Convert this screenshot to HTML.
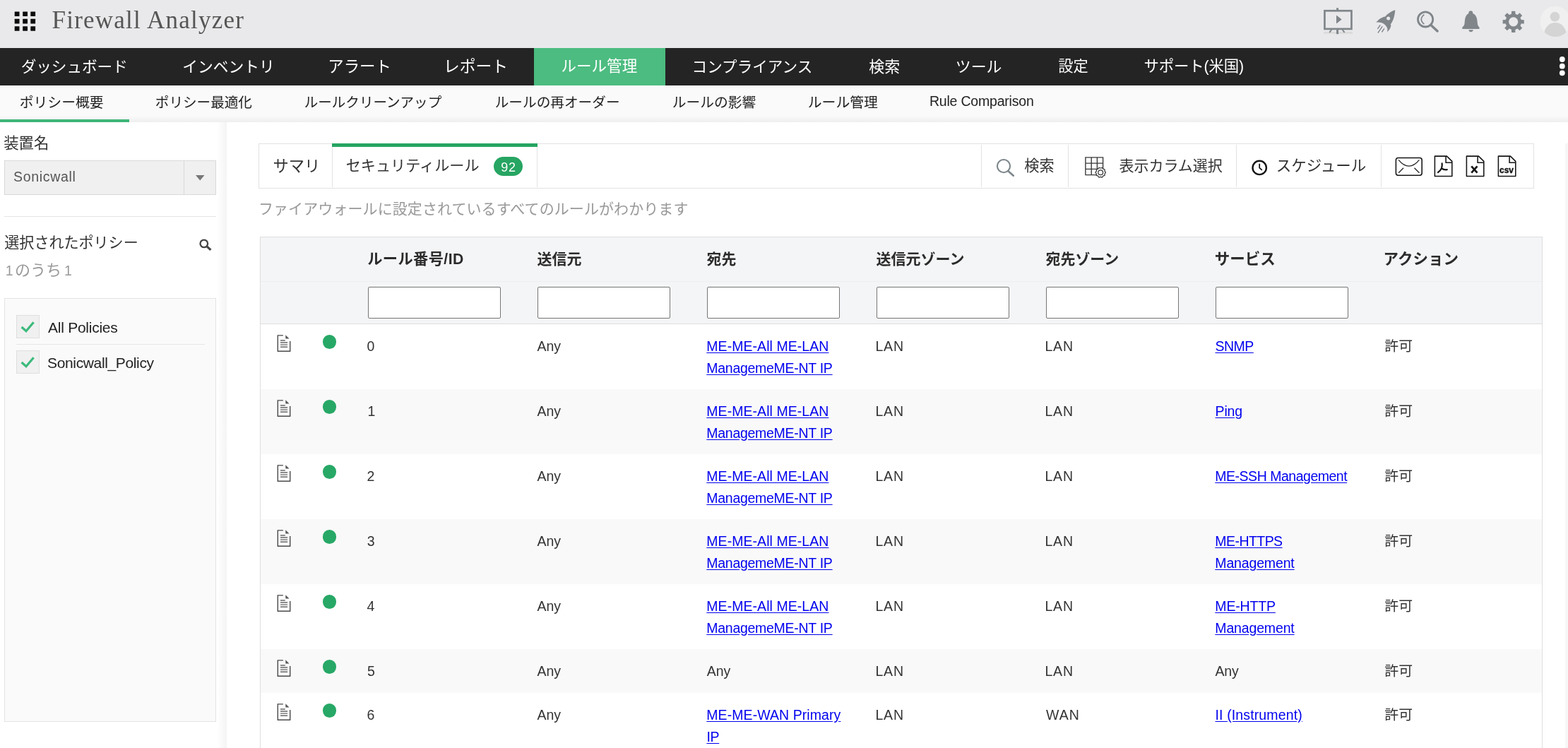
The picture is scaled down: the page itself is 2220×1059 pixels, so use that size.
<!DOCTYPE html>
<html lang="ja"><head><meta charset="utf-8"><title>Firewall Analyzer</title><style>
html,body{margin:0;padding:0}
body{width:2220px;height:1059px;overflow:hidden;position:relative;background:#fff;
font-family:"Liberation Sans","Noto Sans CJK JP",sans-serif;color:#333}
header,nav,aside,main,h1{display:block;margin:0;padding:0;font-weight:normal}
div,.a,.jp,.i{position:absolute}
#app{left:0;top:0;width:2220px;height:1059px;will-change:transform}
.a{white-space:nowrap;margin:0;text-decoration-thickness:1.5px;text-underline-offset:2px}
.jp,.i{display:block;overflow:visible}
.jp text{font-family:"Liberation Sans","Noto Sans CJK JP",sans-serif;white-space:pre}
</style></head>
<body>
<div id="app">
<header>
<div style="left:0px;top:0px;width:2220px;height:68px;background:#e9e9eb"></div>
<svg class="i" style="left:21px;top:16px" width="30" height="30" viewBox="0 0 30 30"><g fill="#0c0c0c"><rect x="-0.30" y="0.50" width="6.8" height="6.6" rx="0.5"/><rect x="11.20" y="0.50" width="6.8" height="6.6" rx="0.5"/><rect x="22.30" y="0.50" width="6.8" height="6.6" rx="0.5"/><rect x="-0.30" y="10.80" width="6.8" height="6.6" rx="0.5"/><rect x="11.20" y="10.80" width="6.8" height="6.6" rx="0.5"/><rect x="22.30" y="10.80" width="6.8" height="6.6" rx="0.5"/><rect x="-0.30" y="21.20" width="6.8" height="6.6" rx="0.5"/><rect x="11.20" y="21.20" width="6.8" height="6.6" rx="0.5"/><rect x="22.30" y="21.20" width="6.8" height="6.6" rx="0.5"/></g></svg>
<h1 class="a" style="left:73.49px;top:10.99px;font-size:35px;line-height:35px;letter-spacing:1.229px;color:#555;font-family:'Liberation Serif',serif;">Firewall Analyzer</h1>
<svg class="i" style="left:1873px;top:10px" width="44" height="40" viewBox="0 0 44 40"><rect x="1.1" y="35" width="40.8" height="2.8" fill="#dbdbdc"/><g fill="none" stroke="#80868a"><rect x="2.45" y="5.25" width="38" height="25.7" stroke-width="2.7"/><path d="M20.6 1.2v4M20.6 32v6.2" stroke-width="3"/><path d="M12.2 32l-2.9 4M27.6 32l3 4" stroke-width="2"/></g><path d="M19 11.5l7.7 6L19 23.4z" fill="#80868a"/></svg>
<svg class="i" style="left:1946px;top:13px" width="32" height="36" viewBox="0 0 32 36"><path fill="#80868a" d="M29.3 1.2C24 2.5 18.5 6.5 15.2 10.4 11.5 11 7 13 2.2 18.8 6 17.8 10 18.8 12 20.1 14.500 21.500 17 24 18.200 27.100 18.600 29 18.400 30.800 17.800 32.300 20 30.500 22.500 27.500 23.300 23.900 23.400 23 23.200 22 22.800 21.200 25 19 28.600 12 29.300 1.200z"/><circle cx="19.65" cy="13.1" r="2.5" fill="#e9e9eb"/><path d="M8.2 22.500L4.400 27.900M11.200 24.400L4.900 33.600M13.900 27.400L10.400 32.500" stroke="#80868a" stroke-width="1.4" fill="none"/></svg>
<svg class="i" style="left:2005px;top:15px" width="33" height="32" viewBox="0 0 33 32"><circle cx="13.1" cy="12.4" r="10.6" fill="none" stroke="#80868a" stroke-width="2.8"/><path d="M11.35 5.7Q3.25 12.43 11.35 19.200" fill="none" stroke="#80868a" stroke-width="1.700"/><path d="M20.700 20.300l9.300 8.700" stroke="#80868a" stroke-width="3.500" stroke-linecap="round"/></svg>
<svg class="i" style="left:2069px;top:15px" width="28" height="32" viewBox="0 0 28 32"><g fill="#80868a"><path d="M13.3 .3c1.700 0 3 1.200 3 2.800 0 .4 0 .7-.1 1C19 5 21 8 21.700 10.500 22.400 13 22.600 15 22.750 17 22.900 19 23.200 20.500 23.600 21.350 24 22.300 24.800 23 25.500 23.500V25.950H1.400V23.500C2.100 23 2.900 22.300 3.600 21.350 4.200 20.500 4.500 19 4.650 17 4.800 15 5 13 5.500 10.500 6.200 8 8 5 10.400 4.100 10.300 3.800 10.300 3.500 10.300 3.100 10.300 1.500 11.600 .3 13.300 .3z"/><path d="M10.300 27.300H16.800C16.500 29.200 15.200 30.300 13.550 30.300S10.600 29.200 10.300 27.300z"/></g></svg>
<svg class="i" style="left:2126px;top:15px" width="34" height="32" viewBox="0 0 34 32"><path d="M13.88 4.75L14.11 0.72L19.29 0.72L19.52 4.75L22.52 6.00L25.53 3.31L29.19 6.97L26.50 9.98L27.75 12.98L31.78 13.21L31.78 18.39L27.75 18.62L26.50 21.62L29.19 24.63L25.53 28.29L22.52 25.60L19.52 26.85L19.29 30.88L14.11 30.88L13.88 26.85L10.88 25.60L7.87 28.29L4.21 24.63L6.90 21.62L5.65 18.62L1.62 18.39L1.62 13.21L5.65 12.98L6.90 9.98L4.21 6.97L7.87 3.31L10.88 6.00zM23.299999999999997 15.8a6.6 6.6 0 1 0 -13.2 0a6.6 6.6 0 1 0 13.2 0z" fill="#80868a" fill-rule="evenodd"/></svg>
<svg class="i" style="left:2180px;top:8px" width="44" height="46" viewBox="0 0 44 46"><defs><clipPath id="avc"><circle cx="22.1" cy="22.4" r="21.7"/></clipPath></defs><circle cx="22.1" cy="22.4" r="21.7" fill="#f0f0f0"/><g fill="#d4d4d4" clip-path="url(#avc)"><circle cx="21.4" cy="15.6" r="6.8"/><ellipse cx="21.9" cy="41.6" rx="16" ry="17.6"/></g></svg>
</header>
<nav>
<div style="left:0px;top:68px;width:2220px;height:53px;background:#242424"></div>
<div style="left:756px;top:68px;width:186px;height:53px;background:#4cbc80"></div>
<span class="t"><svg class="jp" style="left:29.00px;top:81.76px" width="151.00" height="25.65" fill="#fff"><text x="0.71" y="19.49" font-size="21.59">ダッシュボード</text></svg></span>
<span class="t"><svg class="jp" style="left:258.00px;top:81.76px" width="128.00" height="25.65" fill="#fff"><text x="0.13" y="19.49" font-size="21.79">インベントリ</text></svg></span>
<span class="t"><svg class="jp" style="left:465.00px;top:81.76px" width="87.50" height="25.65" fill="#fff"><text x="-0.79" y="19.49" font-size="22.43">アラート</text></svg></span>
<span class="t"><svg class="jp" style="left:630.50px;top:81.76px" width="86.50" height="25.65" fill="#fff"><text x="-3.05" y="19.49" font-size="22.76">レポート</text></svg></span>
<span class="t"><svg class="jp" style="left:793.50px;top:81.76px" width="109.50" height="25.65" fill="#fff"><text x="0.58" y="19.49" font-size="21.53">ルール管理</text></svg></span>
<span class="t"><svg class="jp" style="left:981.00px;top:81.76px" width="171.00" height="25.65" fill="#fff"><text x="-1.43" y="19.49" font-size="21.59">コンプライアンス</text></svg></span>
<span class="t"><svg class="jp" style="left:1229.00px;top:81.76px" width="46.00" height="25.65" fill="#fff"><text x="1.34" y="19.49" font-size="21.98">検索</text></svg></span>
<span class="t"><svg class="jp" style="left:1352.50px;top:81.76px" width="66.50" height="25.65" fill="#fff"><text x="-0.15" y="19.49" font-size="21.89">ツール</text></svg></span>
<span class="t"><svg class="jp" style="left:1496.75px;top:81.76px" width="44.75" height="25.65" fill="#fff"><text x="1.2" y="19.49" font-size="21.22">設定</text></svg></span>
<span class="t"><svg class="jp" style="left:1619.00px;top:81.76px" width="142.50" height="25.65" fill="#fff"><text x="0.56" y="19.49" font-size="21.42" textLength="141.7" lengthAdjust="spacing">サポート(米国)</text></svg></span>
<svg class="i" style="left:2206px;top:79px" width="14" height="30" viewBox="0 0 14 30"><g fill="#fff"><circle cx="5.8" cy="5" r="3.9"/><circle cx="5.8" cy="14.700" r="3.9"/><circle cx="5.8" cy="24.300" r="3.9"/></g></svg>
</nav>
<nav>
<div style="left:0px;top:121px;width:2220px;height:52px;background:linear-gradient(#fafafa 0,#fafafa 43px,#eeeeee 52px)"></div>
<div style="left:0px;top:168.5px;width:183px;height:4.5px;background:#3eb577"></div>
<span class="t"><svg class="jp" style="left:26.75px;top:133.52px" width="120.75" height="23.62" fill="#222"><text x="0.79" y="17.95" font-size="19.8">ポリシー概要</text></svg></span>
<span class="t"><svg class="jp" style="left:218.50px;top:133.52px" width="139.75" height="23.62" fill="#222"><text x="0.81" y="17.95" font-size="19.6">ポリシー最適化</text></svg></span>
<span class="t"><svg class="jp" style="left:430.00px;top:133.52px" width="198.00" height="23.62" fill="#222"><text x="0.71" y="17.95" font-size="19.56">ルールクリーンアップ</text></svg></span>
<span class="t"><svg class="jp" style="left:700.00px;top:133.52px" width="178.00" height="23.62" fill="#222"><text x="0.7" y="17.95" font-size="19.66">ルールの再オーダー</text></svg></span>
<span class="t"><svg class="jp" style="left:950.50px;top:133.52px" width="120.50" height="23.62" fill="#222"><text x="0.7" y="17.95" font-size="19.8">ルールの影響</text></svg></span>
<span class="t"><svg class="jp" style="left:1142.50px;top:133.52px" width="101.25" height="23.62" fill="#222"><text x="0.7" y="17.95" font-size="19.85">ルール管理</text></svg></span>
<span class="a" style="left:1315.90px;top:134.49px;font-size:19.5px;line-height:19.5px;letter-spacing:-0.199px;color:#222;">Rule Comparison</span>
</nav>
<aside>
<div style="left:307px;top:173px;width:14px;height:886px;background:linear-gradient(90deg,#fff,#f4f4f4)"></div>
<span class="t"><svg class="jp" style="left:4.00px;top:190.25px" width="65.00" height="26.29" fill="#333"><text x="1.2" y="19.98" font-size="21.4">装置名</text></svg></span>
<div style="left:6px;top:227px;width:300px;height:49px;background:#f0f0f0;border:1px solid #d9d9d9;box-sizing:border-box"></div>
<div style="left:260px;top:228px;width:1px;height:47px;background:#d9d9d9"></div>
<svg class="i" style="left:276.5px;top:247.7px" width="13" height="8"><path d="M0 0h12.5l-6.25 7.5z" fill="#777"/></svg>
<span class="a" style="left:19.11px;top:240.79px;font-size:19.5px;line-height:19.5px;letter-spacing:0.665px;color:#555;">Sonicwall</span>
<div style="left:6px;top:305.5px;width:299.5px;height:1.5px;background:#e4e4e4"></div>
<span class="t"><svg class="jp" style="left:4.50px;top:332.44px" width="190.50" height="25.51" fill="#333"><text x="1.29" y="19.39" font-size="21.05">選択されたポリシー</text></svg></span>
<svg class="i" style="left:281.5px;top:337.5px" width="19" height="19" viewBox="0 0 19 19"><circle cx="6.8" cy="6.9" r="5.3" fill="none" stroke="#444" stroke-width="2.300"/><path d="M10.900 10.800l5.500 5.100" stroke="#444" stroke-width="3.200" stroke-linecap="butt"/></svg>
<span class="a" style="left:7.71px;top:374.49px;font-size:19.5px;line-height:19.5px;letter-spacing:-1.607px;color:#9a9a9a;">1</span>
<span class="t"><svg class="jp" style="left:21.20px;top:370.93px" width="64.80" height="25.27" fill="#9a9a9a"><text x="0.06" y="19.2" font-size="22.02">のうち</text></svg></span>
<span class="a" style="left:91.01px;top:374.49px;font-size:19.5px;line-height:19.5px;letter-spacing:-1.607px;color:#9a9a9a;">1</span>
<div style="left:6px;top:422px;width:299.5px;height:599.5px;background:#fafafa;border:1.5px solid #e4e4e4;box-sizing:border-box"></div>
<div style="left:23px;top:446px;width:32.5px;height:32.5px;background:#f0f0f0;border:1.5px solid #dfdfdf;box-sizing:border-box"></div>
<svg class="i" style="left:23px;top:446px" width="33" height="33"><path d="M7.6 17L14 22.700L24.600 10.200" fill="none" stroke="#3dba7c" stroke-width="3.200"/></svg>
<div style="left:23px;top:496px;width:32.5px;height:32.5px;background:#f0f0f0;border:1.5px solid #dfdfdf;box-sizing:border-box"></div>
<svg class="i" style="left:23px;top:496px" width="33" height="33"><path d="M7.6 17L14 22.700L24.600 10.200" fill="none" stroke="#3dba7c" stroke-width="3.200"/></svg>
<div style="left:23px;top:486.5px;width:266.5px;height:1.5px;background:#e6e6e6"></div>
<span class="a" style="left:67.96px;top:452.72px;font-size:21px;line-height:21px;letter-spacing:-0.249px;color:#222;">All Policies</span>
<span class="a" style="left:67.05px;top:502.72px;font-size:21px;line-height:21px;letter-spacing:-0.361px;color:#222;">Sonicwall_Policy</span>
</aside>
<main>
<div style="left:2216px;top:203px;width:4px;height:856px;background:#f6f6f6"></div>
<div style="left:366px;top:203px;width:1805.5px;height:63.5px;border:1.5px solid #e2e2e2;box-sizing:border-box;background:#fff"></div>
<div style="left:469.5px;top:205px;width:1.5px;height:60px;background:#e2e2e2"></div>
<div style="left:759.75px;top:205px;width:1.5px;height:60px;background:#e2e2e2"></div>
<div style="left:1388.5px;top:205px;width:1.5px;height:60px;background:#e2e2e2"></div>
<div style="left:1511.5px;top:205px;width:1.5px;height:60px;background:#e2e2e2"></div>
<div style="left:1749.5px;top:205px;width:1.5px;height:60px;background:#e2e2e2"></div>
<div style="left:1954.75px;top:205px;width:1.5px;height:60px;background:#e2e2e2"></div>
<div style="left:470px;top:203px;width:290.5px;height:4.5px;background:#27a562"></div>
<span class="t"><svg class="jp" style="left:385.50px;top:221.09px" width="64.50" height="28.44" fill="#333"><text x="0.5" y="21.62" font-size="22.32">サマリ</text></svg></span>
<span class="t"><svg class="jp" style="left:488.75px;top:221.43px" width="192.00" height="28.05" fill="#333"><text x="0.72" y="21.32" font-size="21.14">セキュリティルール</text></svg></span>
<div style="left:698.75px;top:222px;width:41px;height:27px;background:#27a562;border-radius:14px"></div>
<span class="a" style="left:709.16px;top:227.76px;font-size:18px;line-height:18px;letter-spacing:0.728px;color:#fff;">92</span>
<svg class="i" style="left:1409.5px;top:224.5px" width="27" height="26" viewBox="0 0 27 26"><circle cx="11" cy="10.100" r="9.100" fill="none" stroke="#7c868a" stroke-width="2.100"/><path d="M17.500 17.200l7.300 6.500" stroke="#7c868a" stroke-width="2.600" stroke-linecap="round"/></svg>
<span class="t"><svg class="jp" style="left:1448.50px;top:221.95px" width="44.50" height="26.32" fill="#333"><text x="1.37" y="20.01" font-size="21.19">検索</text></svg></span>
<span class="t"><svg class="jp" style="left:1582.50px;top:221.95px" width="150.00" height="26.32" fill="#333"><text x="1.41" y="20.01" font-size="21">表示カラム選択</text></svg></span>
<span class="t"><svg class="jp" style="left:1806.75px;top:221.95px" width="129.75" height="26.32" fill="#333"><text x="-0.15" y="20.01" font-size="21.48">スケジュール</text></svg></span>
<svg class="i" style="left:1536px;top:222px" width="31" height="31" viewBox="0 0 31 31"><path d="M.9 .9h24.700v24.700H.9zM9.200 .9v24.700M17.400 .9v24.700M.9 9.100h24.700M.9 17.400h24.700" fill="none" stroke="#3a3a3a" stroke-width="1.400"/><path d="M29.40 22.20L28.10 24.12L28.02 26.43L25.84 27.22L24.42 29.05L22.20 28.40L19.98 29.05L18.56 27.22L16.38 26.43L16.30 24.12L15.00 22.20L16.30 20.28L16.38 17.97L18.56 17.18L19.98 15.35L22.20 16.00L24.42 15.35L25.84 17.18L28.02 17.97L28.10 20.28z" fill="#fff" stroke="#3a3a3a" stroke-width="1.300" stroke-linejoin="round"/><circle cx="22.2" cy="22.2" r="3.400" fill="#fff" stroke="#3a3a3a" stroke-width="1.300"/></svg>
<svg class="i" style="left:1771.5px;top:226px" width="23" height="23" viewBox="0 0 23 23"><circle cx="11.2" cy="11.400" r="9.700" fill="none" stroke="#141414" stroke-width="2.400"/><path d="M11.200 5.700v5.900l3.600 3.200" fill="none" stroke="#141414" stroke-width="1.800"/></svg>
<svg class="i" style="left:1974.8px;top:222.0px" width="40" height="28" viewBox="0 0 40 28"><rect x="1.400" y="1.500" width="36.800" height="24.800" rx="3.200" fill="none" stroke="#151515" stroke-width="1.550"/><path d="M5.100 4.300Q19.800 22 34.400 4.300M5.100 22.700l7-7M27.500 15.700l7 7" fill="none" stroke="#222" stroke-width="1.300"/></svg>
<svg class="i" style="left:2029.8px;top:219.6px" width="27" height="31" viewBox="0 0 27 31"><path d="M1.400 1.100H18.400L25.800 8.400V29.400H1.400z" fill="#fff" stroke="#151515" stroke-width="1.550" stroke-linejoin="round"/><path d="M17.100 1.100v9.200h8.700" fill="none" stroke="#151515" stroke-width="1.550"/><path d="M11.600 11.300c.6 3.200-.2 5.500-.6 7-1.400 2.700-3 4.500-5 5.700M11 18.300c2.300 1.700 4.800 2.200 7.800 1.900" fill="none" stroke="#151515" stroke-width="2.200" stroke-linecap="round"/></svg>
<svg class="i" style="left:2074.9px;top:219.6px" width="27" height="31" viewBox="0 0 27 31"><path d="M1.400 1.100H18.400L25.800 8.400V29.400H1.400z" fill="#fff" stroke="#151515" stroke-width="1.550" stroke-linejoin="round"/><path d="M17.100 1.100v9.200h8.700" fill="none" stroke="#151515" stroke-width="1.550"/><path d="M8.300 15.300l8.200 9.400M16.500 15.300l-8.200 9.400" stroke="#151515" stroke-width="2.700" fill="none"/></svg>
<svg class="i" style="left:2120.0px;top:219.6px" width="27" height="31" viewBox="0 0 27 31"><path d="M1.400 1.100H18.400L25.800 8.400V29.400H1.400z" fill="#fff" stroke="#151515" stroke-width="1.550" stroke-linejoin="round"/><path d="M17.100 1.100v9.200h8.700" fill="none" stroke="#151515" stroke-width="1.550"/><text x="3" y="24.600" font-family="Liberation Sans,sans-serif" font-weight="bold" font-size="12.500" textLength="20" lengthAdjust="spacingAndGlyphs" fill="#151515" stroke="#151515" stroke-width=".4">csv</text></svg>
<span class="t"><svg class="jp" style="left:367.00px;top:285.49px" width="610.00" height="24.17" fill="#999"><text x="-1.05" y="18.37" font-size="21" textLength="608.5" lengthAdjust="spacing">ファイアウォールに設定されているすべてのルールがわかります</text></svg></span>
<div style="left:368px;top:335px;width:1816px;height:724px;border:1px solid #dedede;border-bottom:0;box-sizing:border-box;background:#fff"></div>
<div style="left:369px;top:336px;width:1814px;height:122px;background:#f4f5f7"></div>
<div style="left:369px;top:398px;width:1814px;height:1px;background:#eceef0"></div>
<div style="left:369px;top:458px;width:1814px;height:1px;background:#dfdfdf"></div>
<span class="t"><svg class="jp" style="left:518.50px;top:354.98px" width="138.50" height="25.29" fill="#2b2b2b"><text x="1.13" y="19.22" font-size="21.2" font-weight="bold" textLength="136.2" lengthAdjust="spacing">ルール番号/ID</text></svg></span>
<span class="t"><svg class="jp" style="left:758.50px;top:354.98px" width="65.75" height="25.29" fill="#2b2b2b"><text x="1.53" y="19.22" font-size="20.96" font-weight="bold">送信元</text></svg></span>
<span class="t"><svg class="jp" style="left:998.50px;top:354.98px" width="44.50" height="25.29" fill="#2b2b2b"><text x="1.55" y="19.22" font-size="20.92" font-weight="bold">宛先</text></svg></span>
<span class="t"><svg class="jp" style="left:1239.00px;top:354.98px" width="128.50" height="25.29" fill="#2b2b2b"><text x="1.53" y="19.22" font-size="21" font-weight="bold">送信元ゾーン</text></svg></span>
<span class="t"><svg class="jp" style="left:1478.75px;top:354.98px" width="107.00" height="25.29" fill="#2b2b2b"><text x="1.55" y="19.22" font-size="20.93" font-weight="bold">宛先ゾーン</text></svg></span>
<span class="t"><svg class="jp" style="left:1718.50px;top:354.98px" width="87.25" height="25.29" fill="#2b2b2b"><text x="0.75" y="19.22" font-size="21.54" font-weight="bold">サービス</text></svg></span>
<span class="t"><svg class="jp" style="left:1958.75px;top:354.98px" width="107.75" height="25.29" fill="#2b2b2b"><text x="-0.43" y="19.22" font-size="21.48" font-weight="bold">アクション</text></svg></span>
<div style="left:521px;top:406px;width:187.5px;height:44.5px;background:#fff;border:1.5px solid #767676;border-radius:2px;box-sizing:border-box"></div>
<div style="left:761px;top:406px;width:187.5px;height:44.5px;background:#fff;border:1.5px solid #767676;border-radius:2px;box-sizing:border-box"></div>
<div style="left:1001px;top:406px;width:187.5px;height:44.5px;background:#fff;border:1.5px solid #767676;border-radius:2px;box-sizing:border-box"></div>
<div style="left:1241px;top:406px;width:187.5px;height:44.5px;background:#fff;border:1.5px solid #767676;border-radius:2px;box-sizing:border-box"></div>
<div style="left:1481px;top:406px;width:187.5px;height:44.5px;background:#fff;border:1.5px solid #767676;border-radius:2px;box-sizing:border-box"></div>
<div style="left:1721px;top:406px;width:187.5px;height:44.5px;background:#fff;border:1.5px solid #767676;border-radius:2px;box-sizing:border-box"></div>
<svg class="i" style="left:391.5px;top:473.5px" width="20" height="24" viewBox="0 0 20 24"><path d="M8.900 .9H1.300V23.200H18.700V9" fill="none" stroke="#4a4a4a" stroke-width="1.400"/><path d="M12.300 .2v5.300h5.200z" fill="#555"/><path d="M5 8h6.800M5 11h10.100M5 14.100h10.100M5 17.200h10.100" stroke="#666" stroke-width="1.400"/></svg>
<div style="left:456.5px;top:474.0px;width:19.5px;height:19.5px;background:#27a866;border-radius:50%"></div>
<span class="a" style="left:519.49px;top:480.59px;font-size:19.5px;line-height:19.5px;letter-spacing:1.428px;color:#333;">0</span>
<span class="a" style="left:760.46px;top:480.59px;font-size:19.5px;line-height:19.5px;letter-spacing:-0.013px;color:#333;">Any</span>
<a class="a" style="left:1000.30px;top:480.59px;font-size:19.5px;line-height:19.5px;letter-spacing:0.056px;color:#0000ee;text-decoration:underline;">ME-ME-All ME-LAN</a>
<a class="a" style="left:1000.30px;top:511.59px;font-size:19.5px;line-height:19.5px;letter-spacing:-0.281px;color:#0000ee;text-decoration:underline;">ManagemeME-NT IP</a>
<span class="a" style="left:1239.40px;top:480.59px;font-size:19.5px;line-height:19.5px;letter-spacing:0.878px;color:#333;">LAN</span>
<span class="a" style="left:1479.40px;top:480.59px;font-size:19.5px;line-height:19.5px;letter-spacing:0.878px;color:#333;">LAN</span>
<a class="a" style="left:1720.51px;top:480.59px;font-size:19.5px;line-height:19.5px;letter-spacing:-0.508px;color:#0000ee;text-decoration:underline;">SNMP</a>
<span class="t"><svg class="jp" style="left:1958.75px;top:477.80px" width="42.00" height="25.45" fill="#333"><text x="1.25" y="19.34" font-size="19.89">許可</text></svg></span>
<div style="left:369px;top:550.5px;width:1814px;height:92.0px;background:#f9f9f9"></div>
<svg class="i" style="left:391.5px;top:565.5px" width="20" height="24" viewBox="0 0 20 24"><path d="M8.900 .9H1.300V23.200H18.700V9" fill="none" stroke="#4a4a4a" stroke-width="1.400"/><path d="M12.300 .2v5.300h5.200z" fill="#555"/><path d="M5 8h6.800M5 11h10.100M5 14.100h10.100M5 17.200h10.100" stroke="#666" stroke-width="1.400"/></svg>
<div style="left:456.5px;top:566.0px;width:19.5px;height:19.5px;background:#27a866;border-radius:50%"></div>
<span class="a" style="left:520.51px;top:572.59px;font-size:19.5px;line-height:19.5px;letter-spacing:0.093px;color:#333;">1</span>
<span class="a" style="left:760.46px;top:572.59px;font-size:19.5px;line-height:19.5px;letter-spacing:-0.013px;color:#333;">Any</span>
<a class="a" style="left:1000.30px;top:572.59px;font-size:19.5px;line-height:19.5px;letter-spacing:0.056px;color:#0000ee;text-decoration:underline;">ME-ME-All ME-LAN</a>
<a class="a" style="left:1000.30px;top:603.59px;font-size:19.5px;line-height:19.5px;letter-spacing:-0.281px;color:#0000ee;text-decoration:underline;">ManagemeME-NT IP</a>
<span class="a" style="left:1239.40px;top:572.59px;font-size:19.5px;line-height:19.5px;letter-spacing:0.878px;color:#333;">LAN</span>
<span class="a" style="left:1479.40px;top:572.59px;font-size:19.5px;line-height:19.5px;letter-spacing:0.878px;color:#333;">LAN</span>
<a class="a" style="left:1720.60px;top:572.59px;font-size:19.5px;line-height:19.5px;letter-spacing:-0.191px;color:#0000ee;text-decoration:underline;">Ping</a>
<span class="t"><svg class="jp" style="left:1958.75px;top:569.80px" width="42.00" height="25.45" fill="#333"><text x="1.25" y="19.34" font-size="19.89">許可</text></svg></span>
<svg class="i" style="left:391.5px;top:657.5px" width="20" height="24" viewBox="0 0 20 24"><path d="M8.900 .9H1.300V23.200H18.700V9" fill="none" stroke="#4a4a4a" stroke-width="1.400"/><path d="M12.300 .2v5.300h5.200z" fill="#555"/><path d="M5 8h6.800M5 11h10.100M5 14.100h10.100M5 17.200h10.100" stroke="#666" stroke-width="1.400"/></svg>
<div style="left:456.5px;top:658.0px;width:19.5px;height:19.5px;background:#27a866;border-radius:50%"></div>
<span class="a" style="left:519.52px;top:664.59px;font-size:19.5px;line-height:19.5px;letter-spacing:1.616px;color:#333;">2</span>
<span class="a" style="left:760.46px;top:664.59px;font-size:19.5px;line-height:19.5px;letter-spacing:-0.013px;color:#333;">Any</span>
<a class="a" style="left:1000.30px;top:664.59px;font-size:19.5px;line-height:19.5px;letter-spacing:0.056px;color:#0000ee;text-decoration:underline;">ME-ME-All ME-LAN</a>
<a class="a" style="left:1000.30px;top:695.59px;font-size:19.5px;line-height:19.5px;letter-spacing:-0.281px;color:#0000ee;text-decoration:underline;">ManagemeME-NT IP</a>
<span class="a" style="left:1239.40px;top:664.59px;font-size:19.5px;line-height:19.5px;letter-spacing:0.878px;color:#333;">LAN</span>
<span class="a" style="left:1479.40px;top:664.59px;font-size:19.5px;line-height:19.5px;letter-spacing:0.878px;color:#333;">LAN</span>
<a class="a" style="left:1720.30px;top:664.59px;font-size:19.5px;line-height:19.5px;letter-spacing:-0.483px;color:#0000ee;text-decoration:underline;">ME-SSH Management</a>
<span class="t"><svg class="jp" style="left:1958.75px;top:661.80px" width="42.00" height="25.45" fill="#333"><text x="1.25" y="19.34" font-size="19.89">許可</text></svg></span>
<div style="left:369px;top:734.5px;width:1814px;height:92.0px;background:#f9f9f9"></div>
<svg class="i" style="left:391.5px;top:749.5px" width="20" height="24" viewBox="0 0 20 24"><path d="M8.900 .9H1.300V23.200H18.700V9" fill="none" stroke="#4a4a4a" stroke-width="1.400"/><path d="M12.300 .2v5.300h5.200z" fill="#555"/><path d="M5 8h6.800M5 11h10.100M5 14.100h10.100M5 17.200h10.100" stroke="#666" stroke-width="1.400"/></svg>
<div style="left:456.5px;top:750.0px;width:19.5px;height:19.5px;background:#27a866;border-radius:50%"></div>
<span class="a" style="left:519.76px;top:756.59px;font-size:19.5px;line-height:19.5px;letter-spacing:1.255px;color:#333;">3</span>
<span class="a" style="left:760.46px;top:756.59px;font-size:19.5px;line-height:19.5px;letter-spacing:-0.013px;color:#333;">Any</span>
<a class="a" style="left:1000.30px;top:756.59px;font-size:19.5px;line-height:19.5px;letter-spacing:0.056px;color:#0000ee;text-decoration:underline;">ME-ME-All ME-LAN</a>
<a class="a" style="left:1000.30px;top:787.59px;font-size:19.5px;line-height:19.5px;letter-spacing:-0.281px;color:#0000ee;text-decoration:underline;">ManagemeME-NT IP</a>
<span class="a" style="left:1239.40px;top:756.59px;font-size:19.5px;line-height:19.5px;letter-spacing:0.878px;color:#333;">LAN</span>
<span class="a" style="left:1479.40px;top:756.59px;font-size:19.5px;line-height:19.5px;letter-spacing:0.878px;color:#333;">LAN</span>
<a class="a" style="left:1720.30px;top:756.59px;font-size:19.5px;line-height:19.5px;letter-spacing:-0.552px;color:#0000ee;text-decoration:underline;">ME-HTTPS</a>
<a class="a" style="left:1720.30px;top:787.59px;font-size:19.5px;line-height:19.5px;letter-spacing:-0.153px;color:#0000ee;text-decoration:underline;">Management</a>
<span class="t"><svg class="jp" style="left:1958.75px;top:753.80px" width="42.00" height="25.45" fill="#333"><text x="1.25" y="19.34" font-size="19.89">許可</text></svg></span>
<svg class="i" style="left:391.5px;top:841.5px" width="20" height="24" viewBox="0 0 20 24"><path d="M8.900 .9H1.300V23.200H18.700V9" fill="none" stroke="#4a4a4a" stroke-width="1.400"/><path d="M12.300 .2v5.300h5.200z" fill="#555"/><path d="M5 8h6.800M5 11h10.100M5 14.100h10.100M5 17.200h10.100" stroke="#666" stroke-width="1.400"/></svg>
<div style="left:456.5px;top:842.0px;width:19.5px;height:19.5px;background:#27a866;border-radius:50%"></div>
<span class="a" style="left:519.55px;top:848.59px;font-size:19.5px;line-height:19.5px;letter-spacing:1.424px;color:#333;">4</span>
<span class="a" style="left:760.46px;top:848.59px;font-size:19.5px;line-height:19.5px;letter-spacing:-0.013px;color:#333;">Any</span>
<a class="a" style="left:1000.30px;top:848.59px;font-size:19.5px;line-height:19.5px;letter-spacing:0.056px;color:#0000ee;text-decoration:underline;">ME-ME-All ME-LAN</a>
<a class="a" style="left:1000.30px;top:879.59px;font-size:19.5px;line-height:19.5px;letter-spacing:-0.281px;color:#0000ee;text-decoration:underline;">ManagemeME-NT IP</a>
<span class="a" style="left:1239.40px;top:848.59px;font-size:19.5px;line-height:19.5px;letter-spacing:0.878px;color:#333;">LAN</span>
<span class="a" style="left:1479.40px;top:848.59px;font-size:19.5px;line-height:19.5px;letter-spacing:0.878px;color:#333;">LAN</span>
<a class="a" style="left:1720.30px;top:848.59px;font-size:19.5px;line-height:19.5px;letter-spacing:-0.155px;color:#0000ee;text-decoration:underline;">ME-HTTP</a>
<a class="a" style="left:1720.30px;top:879.59px;font-size:19.5px;line-height:19.5px;letter-spacing:-0.153px;color:#0000ee;text-decoration:underline;">Management</a>
<span class="t"><svg class="jp" style="left:1958.75px;top:845.80px" width="42.00" height="25.45" fill="#333"><text x="1.25" y="19.34" font-size="19.89">許可</text></svg></span>
<div style="left:369px;top:918.5px;width:1814px;height:62.0px;background:#f9f9f9"></div>
<svg class="i" style="left:391.5px;top:933.5px" width="20" height="24" viewBox="0 0 20 24"><path d="M8.900 .9H1.300V23.200H18.700V9" fill="none" stroke="#4a4a4a" stroke-width="1.400"/><path d="M12.300 .2v5.300h5.200z" fill="#555"/><path d="M5 8h6.800M5 11h10.100M5 14.100h10.100M5 17.200h10.100" stroke="#666" stroke-width="1.400"/></svg>
<div style="left:456.5px;top:934.0px;width:19.5px;height:19.5px;background:#27a866;border-radius:50%"></div>
<span class="a" style="left:519.97px;top:940.59px;font-size:19.5px;line-height:19.5px;letter-spacing:0.505px;color:#333;">5</span>
<span class="a" style="left:760.46px;top:940.59px;font-size:19.5px;line-height:19.5px;letter-spacing:-0.013px;color:#333;">Any</span>
<span class="a" style="left:1000.71px;top:940.59px;font-size:19.5px;line-height:19.5px;letter-spacing:-0.013px;color:#333;">Any</span>
<span class="a" style="left:1239.40px;top:940.59px;font-size:19.5px;line-height:19.5px;letter-spacing:0.878px;color:#333;">LAN</span>
<span class="a" style="left:1479.40px;top:940.59px;font-size:19.5px;line-height:19.5px;letter-spacing:0.878px;color:#333;">LAN</span>
<span class="a" style="left:1720.46px;top:940.59px;font-size:19.5px;line-height:19.5px;letter-spacing:-0.138px;color:#333;">Any</span>
<span class="t"><svg class="jp" style="left:1958.75px;top:937.80px" width="42.00" height="25.45" fill="#333"><text x="1.25" y="19.34" font-size="19.89">許可</text></svg></span>
<svg class="i" style="left:391.5px;top:995.5px" width="20" height="24" viewBox="0 0 20 24"><path d="M8.900 .9H1.300V23.200H18.700V9" fill="none" stroke="#4a4a4a" stroke-width="1.400"/><path d="M12.300 .2v5.300h5.200z" fill="#555"/><path d="M5 8h6.800M5 11h10.100M5 14.100h10.100M5 17.200h10.100" stroke="#666" stroke-width="1.400"/></svg>
<div style="left:456.5px;top:996.0px;width:19.5px;height:19.5px;background:#27a866;border-radius:50%"></div>
<span class="a" style="left:519.51px;top:1002.59px;font-size:19.5px;line-height:19.5px;letter-spacing:1.502px;color:#333;">6</span>
<span class="a" style="left:760.46px;top:1002.59px;font-size:19.5px;line-height:19.5px;letter-spacing:-0.013px;color:#333;">Any</span>
<a class="a" style="left:1000.30px;top:1002.59px;font-size:19.5px;line-height:19.5px;letter-spacing:0.073px;color:#0000ee;text-decoration:underline;">ME-ME-WAN Primary</a>
<a class="a" style="left:1000.40px;top:1033.59px;font-size:19.5px;line-height:19.5px;letter-spacing:-0.296px;color:#0000ee;text-decoration:underline;">IP</a>
<span class="a" style="left:1239.40px;top:1002.59px;font-size:19.5px;line-height:19.5px;letter-spacing:0.878px;color:#333;">LAN</span>
<span class="a" style="left:1480.91px;top:1002.59px;font-size:19.5px;line-height:19.5px;letter-spacing:1.091px;color:#333;">WAN</span>
<a class="a" style="left:1720.50px;top:1002.59px;font-size:19.5px;line-height:19.5px;letter-spacing:0.132px;color:#0000ee;text-decoration:underline;">II (Instrument)</a>
<span class="t"><svg class="jp" style="left:1958.75px;top:999.80px" width="42.00" height="25.45" fill="#333"><text x="1.25" y="19.34" font-size="19.89">許可</text></svg></span>
</main>
</div>
</body></html>
